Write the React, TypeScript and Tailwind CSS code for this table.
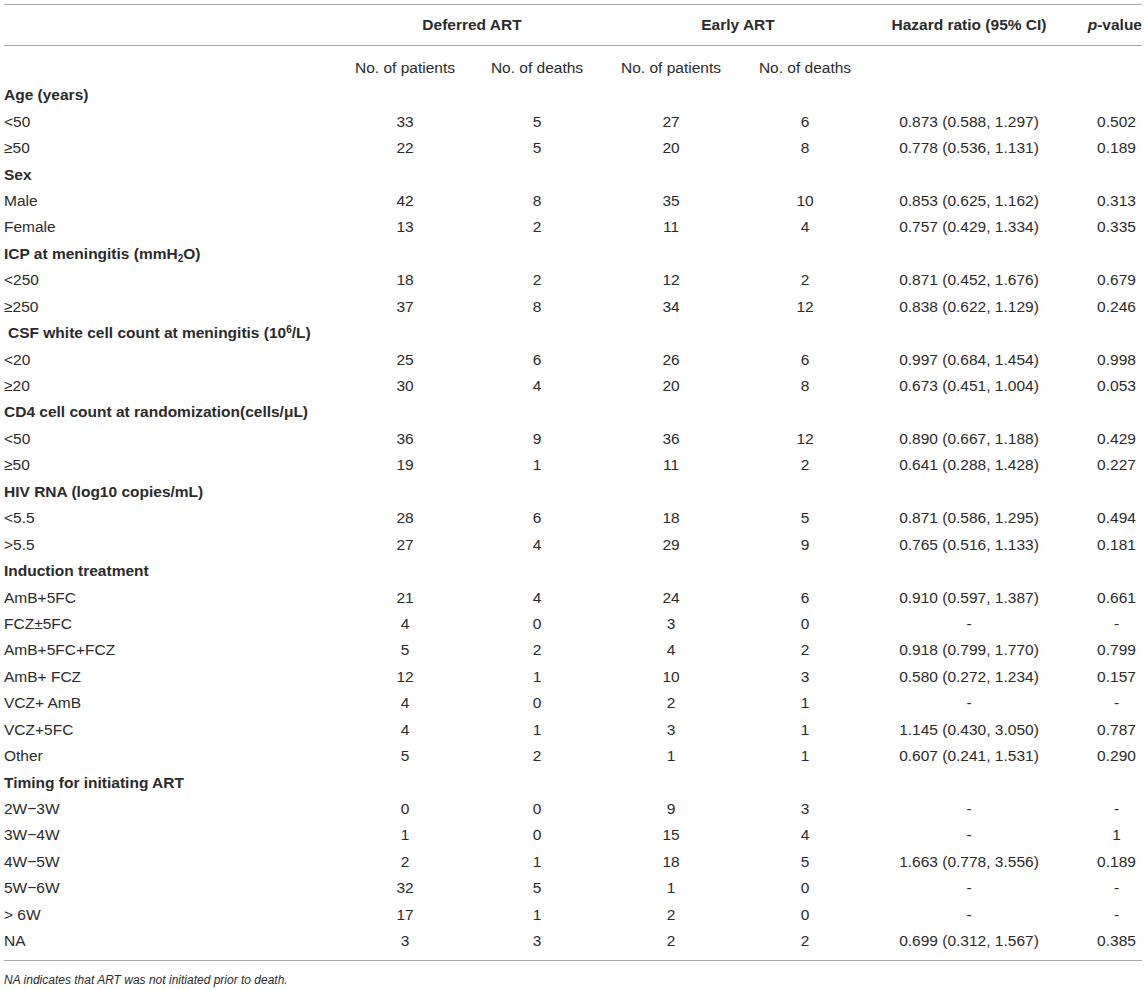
import React from 'react';

type Row =
  | { kind: 'group'; label: React.ReactNode; indent?: boolean }
  | { kind: 'data'; label: string; cells: string[] };

const rows: Row[] = [
  { kind: 'group', label: 'Age (years)' },
  { kind: 'data', label: '<50', cells: ['33', '5', '27', '6', '0.873 (0.588, 1.297)', '0.502'] },
  { kind: 'data', label: '≥50', cells: ['22', '5', '20', '8', '0.778 (0.536, 1.131)', '0.189'] },
  { kind: 'group', label: 'Sex' },
  { kind: 'data', label: 'Male', cells: ['42', '8', '35', '10', '0.853 (0.625, 1.162)', '0.313'] },
  { kind: 'data', label: 'Female', cells: ['13', '2', '11', '4', '0.757 (0.429, 1.334)', '0.335'] },
  {
    kind: 'group',
    label: (
      <>
        ICP at meningitis (mmH<span className="relative top-[3px] text-[10px] leading-none">2</span>O)
      </>
    ),
  },
  { kind: 'data', label: '<250', cells: ['18', '2', '12', '2', '0.871 (0.452, 1.676)', '0.679'] },
  { kind: 'data', label: '≥250', cells: ['37', '8', '34', '12', '0.838 (0.622, 1.129)', '0.246'] },
  {
    kind: 'group',
    indent: true,
    label: (
      <>
        CSF white cell count at meningitis (10<span className="relative top-[-5px] text-[10px] leading-none">6</span>/L)
      </>
    ),
  },
  { kind: 'data', label: '<20', cells: ['25', '6', '26', '6', '0.997 (0.684, 1.454)', '0.998'] },
  { kind: 'data', label: '≥20', cells: ['30', '4', '20', '8', '0.673 (0.451, 1.004)', '0.053'] },
  { kind: 'group', label: 'CD4 cell count at randomization(cells/μL)' },
  { kind: 'data', label: '<50', cells: ['36', '9', '36', '12', '0.890 (0.667, 1.188)', '0.429'] },
  { kind: 'data', label: '≥50', cells: ['19', '1', '11', '2', '0.641 (0.288, 1.428)', '0.227'] },
  { kind: 'group', label: 'HIV RNA (log10 copies/mL)' },
  { kind: 'data', label: '<5.5', cells: ['28', '6', '18', '5', '0.871 (0.586, 1.295)', '0.494'] },
  { kind: 'data', label: '>5.5', cells: ['27', '4', '29', '9', '0.765 (0.516, 1.133)', '0.181'] },
  { kind: 'group', label: 'Induction treatment' },
  { kind: 'data', label: 'AmB+5FC', cells: ['21', '4', '24', '6', '0.910 (0.597, 1.387)', '0.661'] },
  { kind: 'data', label: 'FCZ±5FC', cells: ['4', '0', '3', '0', '-', '-'] },
  { kind: 'data', label: 'AmB+5FC+FCZ', cells: ['5', '2', '4', '2', '0.918 (0.799, 1.770)', '0.799'] },
  { kind: 'data', label: 'AmB+ FCZ', cells: ['12', '1', '10', '3', '0.580 (0.272, 1.234)', '0.157'] },
  { kind: 'data', label: 'VCZ+ AmB', cells: ['4', '0', '2', '1', '-', '-'] },
  { kind: 'data', label: 'VCZ+5FC', cells: ['4', '1', '3', '1', '1.145 (0.430, 3.050)', '0.787'] },
  { kind: 'data', label: 'Other', cells: ['5', '2', '1', '1', '0.607 (0.241, 1.531)', '0.290'] },
  { kind: 'group', label: 'Timing for initiating ART' },
  { kind: 'data', label: '2W−3W', cells: ['0', '0', '9', '3', '-', '-'] },
  { kind: 'data', label: '3W−4W', cells: ['1', '0', '15', '4', '-', '1'] },
  { kind: 'data', label: '4W−5W', cells: ['2', '1', '18', '5', '1.663 (0.778, 3.556)', '0.189'] },
  { kind: 'data', label: '5W−6W', cells: ['32', '5', '1', '0', '-', '-'] },
  { kind: 'data', label: '> 6W', cells: ['17', '1', '2', '0', '-', '-'] },
  { kind: 'data', label: 'NA', cells: ['3', '3', '2', '2', '0.699 (0.312, 1.567)', '0.385'] },
];

const grid = 'grid grid-cols-[336px_130px_134px_134px_134px_194px_76px]';

export default function App() {
  return (
    <div
      className="w-[1146px] bg-white px-[4px] pt-[4px] pb-[4px] text-[15.5px] leading-[18px] text-[#2b2b2b]"
      style={{ fontFamily: '"Liberation Sans", Arial, sans-serif' }}
    >
      <div className="h-px bg-[#a8a8a8]" />
      <div className={`${grid} h-[40px] items-center font-bold`}>
        <div />
        <div className="col-span-2 text-center">Deferred ART</div>
        <div className="col-span-2 text-center">Early ART</div>
        <div className="text-center whitespace-nowrap">Hazard ratio (95% CI)</div>
        <div className="text-right whitespace-nowrap">
          <i>p</i>-value
        </div>
      </div>
      <div className="h-px bg-[#a8a8a8]" />
      <div className={`${grid} h-[36px] pt-[13px]`}>
        <div />
        <div className="text-center whitespace-nowrap">No. of patients</div>
        <div className="text-center whitespace-nowrap">No. of deaths</div>
        <div className="text-center whitespace-nowrap">No. of patients</div>
        <div className="text-center whitespace-nowrap">No. of deaths</div>
        <div />
        <div />
      </div>
      {rows.map((row, i) =>
        row.kind === 'group' ? (
          <div key={i} className="flex h-[26.44px] items-center font-bold">
            <span className={row.indent ? 'pl-[4px]' : ''}>{row.label}</span>
          </div>
        ) : (
          <div key={i} className={`${grid} h-[26.44px] items-center`}>
            <div>{row.label}</div>
            {row.cells.map((c, j) => (
              <div
                key={j}
                className={j === 5 ? 'pl-[25px] text-center' : 'text-center whitespace-nowrap'}
              >
                {c}
              </div>
            ))}
          </div>
        )
      )}
      <div className="mt-[6px] h-px bg-[#a8a8a8]" />
      <p className="mt-[12px] text-[12px] leading-[14px] italic">
        NA indicates that ART was not initiated prior to death.
      </p>
    </div>
  );
}
